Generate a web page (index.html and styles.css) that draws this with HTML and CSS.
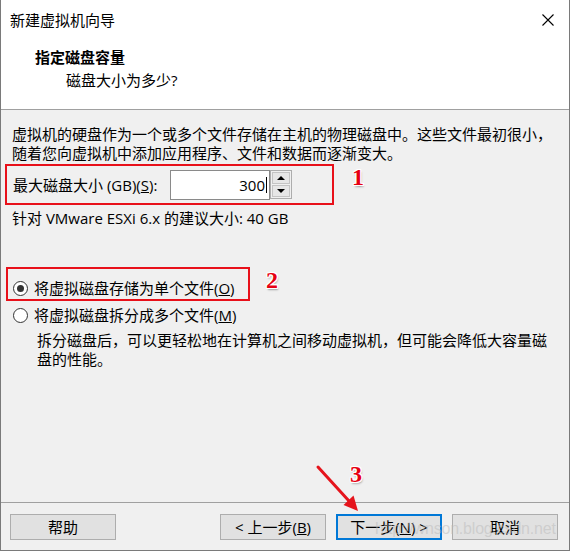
FILE: index.html
```html
<!DOCTYPE html>
<html lang="zh-CN">
<head>
<meta charset="utf-8">
<title>新建虚拟机向导</title>
<link rel="stylesheet" href="styles.css">
</head>
<body>
<div class="window">
  <div class="titlebar">
    <span class="title">新建虚拟机向导</span>
    <svg class="close" width="12" height="12" viewBox="0 0 12 12"><path d="M0.5 0.5 L11.5 11.5 M11.5 0.5 L0.5 11.5" stroke="#000" stroke-width="1.1" fill="none"/></svg>
  </div>
  <div class="header">
    <div class="h-title">指定磁盘容量</div>
    <div class="h-sub">磁盘大小为多少?</div>
  </div>
  <div class="content">
    <p class="intro">虚拟机的硬盘作为一个或多个文件存储在主机的物理磁盘中。这些文件最初很小，<br>随着您向虚拟机中添加应用程序、文件和数据而逐渐变大。</p>
    <div class="size-row mark">
      <span class="size-label">最大磁盘大小 (GB)(<u>S</u>):</span>
      <div class="spin-input"><span class="val">300</span><i class="caret"></i></div>
      <div class="spin-btns"><div class="sb up"></div><div class="sb down"></div></div>
    </div>
    <p class="rec">针对 VMware ESXi 6.x 的建议大小: 40 GB</p>
    <div class="radio-row mark first">
      <span class="radio checked"></span><span>将虚拟磁盘存储为单个文件(<u>O</u>)</span>
    </div>
    <div class="radio-row second">
      <span class="radio"></span><span>将虚拟磁盘拆分成多个文件(<u>M</u>)</span>
    </div>
    <p class="desc">拆分磁盘后，可以更轻松地在计算机之间移动虚拟机，但可能会降低大容量磁<br>盘的性能。</p>
  </div>
  <div class="footer">
    <button class="btn">帮助</button>
    <div class="spacer"></div>
    <button class="btn">&lt; 上一步(<u>B</u>)</button>
    <button class="btn primary">下一步(<u>N</u>) &gt;</button>
    <button class="btn">取消</button>
  </div>

  <span class="num n1">1</span>
  <span class="num n2">2</span>
  <span class="num n3">3</span>
  <svg class="arrow" width="60" height="60" viewBox="310 460 60 60">
    <line x1="318" y1="467" x2="349" y2="501" stroke="#e5141c" stroke-width="3" stroke-linecap="round"/>
    <polygon points="358,511 343.5,505 353.5,495.5" fill="#e5141c"/>
  </svg>
  <span class="watermark">http://wnson.blog.csdn.net</span>
</div>
</body>
</html>
```

FILE: styles.css
```css
html, body {
  margin: 0;
  padding: 0;
}

body {
  width: 570px;
  height: 551px;
  font-family: "Open Sans", "Noto Sans CJK SC", sans-serif;
  font-size: 15px;
  color: #000;
  overflow: hidden;
}

.window {
  position: relative;
  width: 570px;
  height: 551px;
  box-sizing: border-box;
  border: 1px solid #7a7a7a;
  border-top: none;
  background: #f0f0f0;
  display: flex;
  flex-direction: column;
  overflow: hidden;
}

.titlebar {
  height: 40px;
  flex: none;
  background: #fff;
  display: flex;
  align-items: center;
  justify-content: space-between;
  padding: 0 15px 0 9px;
}

.title {
  line-height: 20px;
}

.close {
  display: block;
  margin-top: -1px;
}

.header {
  height: 70px;
  flex: none;
  box-sizing: border-box;
  background: #fff;
  border-bottom: 1px solid #a0a0a0;
  padding-top: 6px;
}

.h-title {
  font-weight: bold;
  line-height: 22px;
  padding-left: 34px;
}

.h-sub {
  line-height: 24px;
  padding-left: 65px;
}

.content {
  flex: 1;
  padding: 15px 12px 0 11px;
}

.intro {
  margin: 0;
  line-height: 19px;
}

.mark {
  border: 2px solid #e8101a;
}

.size-row {
  display: flex;
  align-items: center;
  width: 329px;
  height: 41px;
  box-sizing: border-box;
  margin: 1px 0 0 -7px;
  padding: 4px 0 3px 6px;
}

.size-label {
  flex: 0 0 157px;
  line-height: 19px;
}

.spin-input {
  width: 100px;
  height: 30px;
  box-sizing: border-box;
  border: 1px solid #8a8a8a;
  background: #fff;
  display: flex;
  align-items: center;
  justify-content: flex-end;
  padding-right: 2px;
}

.val {
  line-height: 20px;
}

.caret {
  display: block;
  width: 1px;
  height: 16px;
  background: #000;
  margin-left: 1px;
}

.spin-btns {
  width: 22px;
  height: 29px;
  box-sizing: border-box;
  border: 1px solid #adadad;
  background: #f0f0f0;
  display: flex;
  flex-direction: column;
  gap: 1px;
  padding: 1px;
  margin-top: -1px;
}

.sb {
  flex: 1;
  border: 1px solid #c4c4c4;
  background: #e6e6e6;
  display: flex;
  align-items: center;
  justify-content: center;
}

.sb::after {
  content: "";
  width: 0;
  height: 0;
  border-left: 4px solid transparent;
  border-right: 4px solid transparent;
}

.up::after {
  border-bottom: 4px solid #000;
}

.down::after {
  border-top: 4px solid #000;
}

.rec {
  margin: 4px 0 0 0;
  line-height: 19px;
}

.radio-row {
  display: flex;
  align-items: center;
  line-height: 20px;
}

.radio-row.first {
  width: 244px;
  box-sizing: border-box;
  margin: 39px 0 0 -6px;
  padding: 9px 0 1px 5px;
}

.radio-row.second {
  margin-top: 4px;
  padding-left: 1px;
}

.radio {
  width: 15px;
  height: 15px;
  box-sizing: border-box;
  border: 1px solid #333;
  border-radius: 50%;
  background: #fff;
  margin-right: 6px;
  display: flex;
  align-items: center;
  justify-content: center;
}

.radio.checked::after {
  content: "";
  width: 7px;
  height: 7px;
  border-radius: 50%;
  background: #333;
}

.desc {
  margin: 6px 0 0 0;
  padding-left: 25px;
  line-height: 19px;
}

.footer {
  flex: none;
  display: flex;
  align-items: flex-start;
  gap: 10px;
  border-top: 1px solid #a0a0a0;
  padding: 11px 11px 10px 9px;
}

.spacer {
  flex: 1;
}

.btn {
  width: 106px;
  height: 26px;
  box-sizing: border-box;
  border: 1px solid #adadad;
  background: #e1e1e1;
  font-family: "Open Sans", "Noto Sans CJK SC", sans-serif;
  font-size: 15px;
  line-height: 22px;
  color: #000;
  padding: 0;
  margin: 0;
}

.btn.primary {
  border: 2px solid #0078d7;
}

.num {
  position: absolute;
  font-family: "Liberation Serif", serif;
  font-weight: bold;
  font-size: 24px;
  line-height: 24px;
  color: #e60012;
  text-shadow:
    1px 0 #fff, -1px 0 #fff, 0 1px #fff, 0 -1px #fff,
    1px 1px #fff, -1px -1px #fff, 1px -1px #fff, -1px 1px #fff,
    1px 2px 2px rgba(0, 0, 0, 0.35);
}

.n1 { left: 351px; top: 165px; }
.n2 { left: 265px; top: 268px; }
.n3 { left: 349px; top: 462px; }

.arrow {
  position: absolute;
  left: 309px;
  top: 460px;
}

.watermark {
  position: absolute;
  left: 374px;
  top: 518px;
  font-family: "Liberation Sans", sans-serif;
  font-size: 16px;
  line-height: 22px;
  letter-spacing: -0.2px;
  color: rgba(185, 185, 185, 0.5);
  white-space: nowrap;
  pointer-events: none;
}
```
